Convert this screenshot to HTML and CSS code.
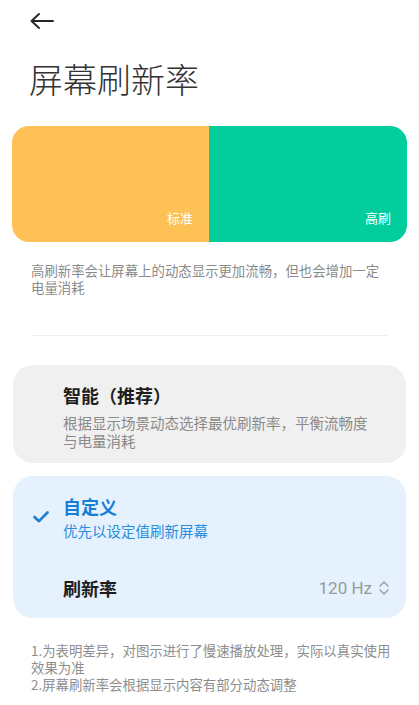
FILE: index.html
```html
<!DOCTYPE html>
<html lang="zh-CN">
<head>
<meta charset="utf-8">
<title>屏幕刷新率</title>
<link rel="stylesheet" href="styles.css">
</head>
<body>
<div class="page">
  <div class="topbar">
    <svg class="back" width="24" height="16" viewBox="0 0 24 16"><path d="M1.5 8 H23 M9 1 L1.5 8 L9 15" fill="none" stroke="#262626" stroke-width="1.9" stroke-linecap="round" stroke-linejoin="round"/></svg>
  </div>
  <h1 class="title">屏幕刷新率</h1>

  <div class="preview">
    <div class="half std"><span>标准</span></div>
    <div class="half high"><span>高刷</span></div>
  </div>

  <p class="desc">高刷新率会让屏幕上的动态显示更加流畅，但也会增加一定电量消耗</p>

  <div class="divider"></div>

  <div class="option">
    <div class="opt-text">
      <div class="opt-title">智能（推荐）</div>
      <div class="opt-sub">根据显示场景动态选择最优刷新率，平衡流畅度与电量消耗</div>
    </div>
  </div>

  <div class="option selected">
    <div class="opt-row">
      <svg class="check" width="16" height="12" viewBox="0 0 16 12"><path d="M1.5 6 L6 10.2 L14.5 1.5" fill="none" stroke="#1b7fd4" stroke-width="2.6" stroke-linecap="round" stroke-linejoin="round"/></svg>
      <div class="opt-text">
        <div class="opt-title blue">自定义</div>
        <div class="opt-sub blue">优先以设定值刷新屏幕</div>
      </div>
    </div>
    <div class="rate-row">
      <div class="rate-label">刷新率</div>
      <div class="rate-value">120 Hz
        <svg class="updown" width="12" height="18" viewBox="0 0 12 18"><path d="M2 7 L6 3 L10 7 M2 11 L6 15 L10 11" fill="none" stroke="#9a9a9a" stroke-width="1.4" stroke-linecap="round" stroke-linejoin="round"/></svg>
      </div>
    </div>
  </div>

  <p class="notes">1.为表明差异，对图示进行了慢速播放处理，实际以真实使用效果为准<br>2.屏幕刷新率会根据显示内容有部分动态调整</p>
</div>
</body>
</html>
```

FILE: styles.css
```css
* { box-sizing: border-box; }
html, body { margin: 0; padding: 0; background: #ffffff; }
body {
  font-family: "Noto Sans CJK SC", "Noto Sans", sans-serif;
  color: #222;
}
.page { width: 419px; }

.topbar {
  height: 42px;
  display: flex;
  align-items: center;
  padding-left: 30px;
}
.back { display: block; }

.title {
  margin: 17px 0 0 0;
  padding-left: 29px;
  font-size: 34px;
  line-height: 40px;
  font-weight: 300;
  color: #333;
}

.preview {
  margin: 27px 12px 0 12px;
  height: 116px;
  border-radius: 17px;
  overflow: hidden;
  display: flex;
}
.half {
  display: flex;
  align-items: flex-end;
  justify-content: flex-end;
  padding: 0 16px 15px 0;
  color: #fff;
  font-size: 13px;
  line-height: 18px;
}
.std { flex: 197 0 0; background: #fdc156; }
.high { flex: 198 0 0; background: #02ce9d; }

.desc {
  margin: 19.5px 30px 0 31px;
  font-size: 13.4px;
  line-height: 17px;
  color: #8a8a8a;
}

.divider {
  margin: 39px 31px 0 31px;
  height: 1px;
  background: #efefef;
}

.option {
  margin: 29px 13px 0 13px;
  border-radius: 20px;
  background: #f0f0f0;
  padding: 18px 30px 13.5px 50px;
}
.opt-title {
  font-size: 18px;
  line-height: 24px;
  font-weight: 700;
  color: #1e1e1e;
}
.opt-sub {
  margin-top: 7px;
  font-size: 14.5px;
  line-height: 18px;
  color: #8a8a8a;
}

.option.selected {
  margin-top: 13px;
  background: #e5f1fd;
  padding: 18px 16px 18px 20px;
}
.opt-row {
  display: flex;
  align-items: center;
  gap: 14px;
}
.check { display: block; flex: none; }
.opt-title.blue { color: #1680d8; }
.opt-sub.blue { color: #2a8ee0; margin-top: 3.5px; }

.rate-row {
  margin-top: 36.5px;
  display: flex;
  align-items: center;
  justify-content: space-between;
  padding-left: 30px;
}
.rate-label {
  font-size: 18px;
  line-height: 24px;
  font-weight: 700;
  color: #1e1e1e;
}
.rate-value {
  display: flex;
  align-items: center;
  gap: 6px;
  font-family: "Roboto", "Noto Sans", sans-serif;
  font-size: 17px;
  line-height: 24px;
  color: #9a9a9a;
}
.updown { display: block; }

.notes {
  margin: 24px 26px 0 31px;
  font-size: 13.4px;
  line-height: 17px;
  color: #8e8e8e;
}
```
